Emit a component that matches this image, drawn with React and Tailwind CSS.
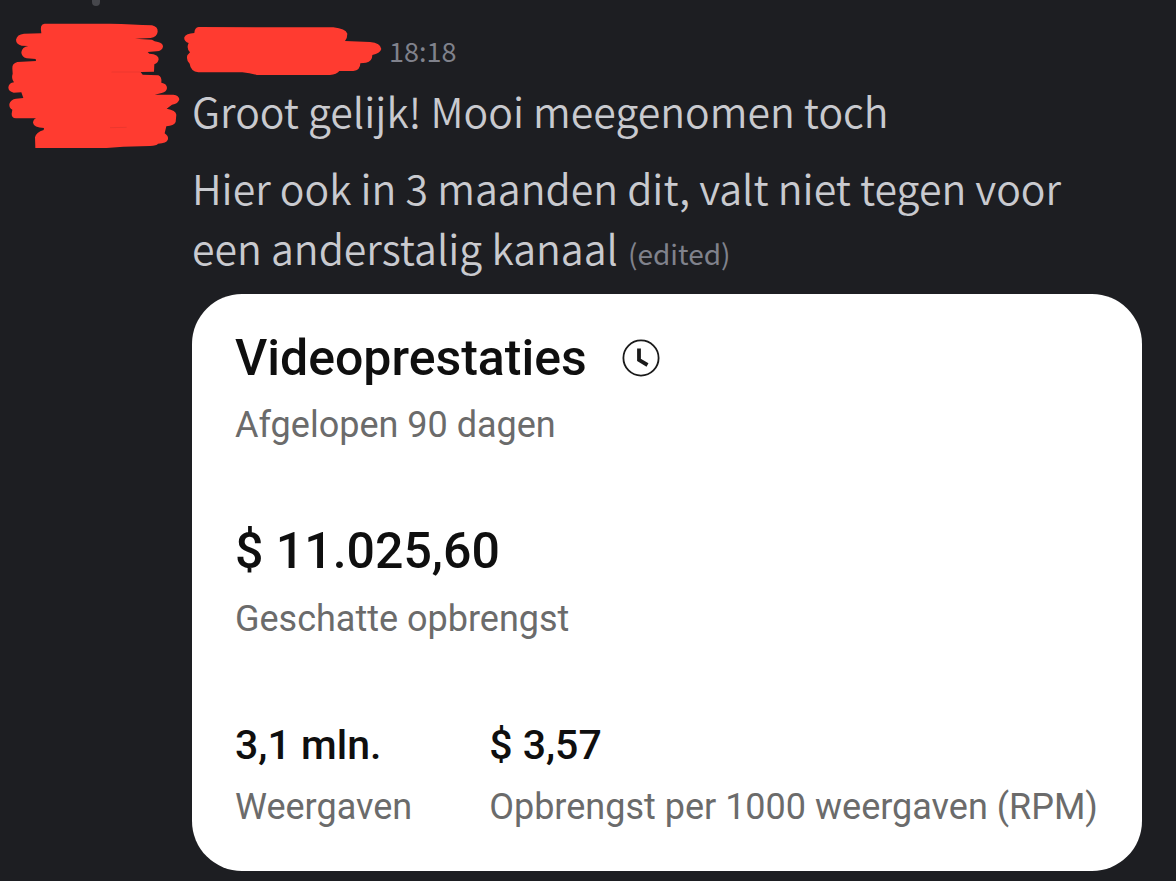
import React from "react";

const messages = [
    { id: 1, text: "Groot gelijk! Mooi meegenomen toch", edited: false },
    {
        id: 2,
        text: "Hier ook in 3 maanden dit, valt niet tegen voor een anderstalig kanaal",
        edited: true,
    },
];

const stats = [
    { label: "Weergaven", value: "3,1 mln." },
    { label: "Opbrengst per 1000 weergaven (RPM)", value: "$ 3,57" },
];

function HiddenAvatar() {
    return (
        <svg
            viewBox="21 66 519 384"
            className="h-32 w-[173px] shrink-0"
            role="img"
            aria-label="Hidden avatar"
        >
            <path
                fill="#ff3b30"
                d="M134 71 L330 71 Q400 73 456 76 Q474 80 473 95 Q471 111 452 114 L405 116 L456 119 Q463 125 474 126 Q489 129 489 140 Q486 153 470 154 L443 156 L448 161 Q477 163 476 178 Q474 190 463 193 L462 215 L422 216 L428 224 L475 226 Q486 230 484 248 Q501 251 501 264 Q500 276 485 279 L464 284 L520 284 Q537 286 538 298 Q535 312 516 314 L500 326 Q528 330 529 344 L527 366 Q522 377 499 379 L494 400 Q506 408 504 418 Q500 431 474 431 Q470 437 450 438 L370 440 L320 444 L106 444 L105 412 Q108 397 131 390 L132 384 Q101 382 99 368 Q100 357 109 355 L48 355 Q34 353 35 341 L37 329 Q27 325 28 312 Q32 298 48 296 L70 294 L64 277 L41 278 Q25 275 25 262 Q27 249 42 247 Q33 235 38 221 L37 205 Q36 190 52 186 L108 183 L107 177 L80 175 Q64 171 64 157 Q66 141 85 138 L65 137 Q48 132 48 119 Q51 103 72 101 L124 100 Q118 72 134 71 Z"
            />
            <path
                fill="none"
                stroke="#d9352c"
                strokeWidth="1.5"
                d="M335 216 L422 216 M330 383 L380 382"
            />
        </svg>
    );
}

function HiddenName() {
    return (
        <svg
            viewBox="12 75 597 156"
            className="-ml-2 h-[52px] w-[199px] shrink-0"
            role="img"
            aria-label="Hidden name"
        >
            <path
                fill="#ff3b30"
                d="M56 81 L460 82 Q497 86 502 101 Q502 115 495 123 L570 126 Q602 129 604 147 Q600 161 577 165 Q577 185 558 188 L541 190 Q541 211 520 213 L478 213 Q470 224 450 225 L230 225 Q210 219 187 217 L55 217 Q32 214 29 191 Q18 181 22 166 L30 157 Q18 145 26 129 Q11 124 13 112 Q18 100 43 99 Q44 82 56 81 Z"
            />
        </svg>
    );
}

function ClockIcon() {
    return (
        <svg viewBox="0 0 40 40" className="size-10" fill="none" stroke="#1a1a1a" aria-hidden="true">
            <circle cx="20" cy="20" r="17.6" strokeWidth="1.8" />
            <path d="M18 10.5 V22 L26.5 27" strokeWidth="3.8" />
        </svg>
    );
}

function PerformanceCard() {
    return (
        <section className="mr-[34px] rounded-[50px] bg-white px-[43px] pt-9 pb-10 font-['Roboto',sans-serif]">
            <div className="flex items-center gap-[34px]">
                <h2 className="text-[50px] leading-14 font-medium text-[#0f0f0f]">Videoprestaties</h2>
                <ClockIcon />
            </div>
            <p className="mt-[15px] text-[36px] leading-12 text-[#6b6b6b]">Afgelopen 90 dagen</p>

            <p className="mt-[74px] text-[50px] leading-14 font-medium text-[#0f0f0f]">$ 11.025,60</p>
            <p className="mt-4 text-[36px] leading-12 text-[#6b6b6b]">Geschatte opbrengst</p>

            <dl className="mt-[74px] flex gap-[77px]">
                {stats.map((stat) => (
                    <div key={stat.label} className="flex flex-col-reverse gap-2.5">
                        <dt className="text-[36px] leading-12 whitespace-nowrap text-[#6b6b6b]">{stat.label}</dt>
                        <dd className="text-[41px] leading-14 font-medium text-[#0f0f0f]">{stat.value}</dd>
                    </div>
                ))}
            </dl>
        </section>
    );
}

const App = () => {
    return (
        <main className="min-h-screen bg-[#1d1e22] font-['Noto_Sans_CJK_SC',sans-serif] text-[#c9cacf]">
            <div className="flex h-[22px] w-48 items-start justify-center">
                <span className="h-1.5 w-2 rounded-b-full bg-[#46474c]" />
            </div>

            <article className="flex gap-3 pb-2 pl-[7px]">
                <HiddenAvatar />
                <div className="min-w-0 flex-1">
                    <header className="mt-[3px] mb-[3px] flex items-center gap-1.5">
                        <HiddenName />
                        <time className="text-[27px] leading-[52px] text-[#80828c]">18:18</time>
                    </header>

                    <div className="space-y-[17px]">
                        {messages.map((message) => (
                            <p key={message.id} className="pr-16 text-[41px] leading-[60px] font-[350]">
                                {message.text}
                                {message.edited && (
                                    <span className="ml-2.5 text-[28px] leading-none font-normal text-[#80828c]">(edited)</span>
                                )}
                            </p>
                        ))}
                        <PerformanceCard />
                    </div>
                </div>
            </article>
        </main>
    );
};

export default App;
